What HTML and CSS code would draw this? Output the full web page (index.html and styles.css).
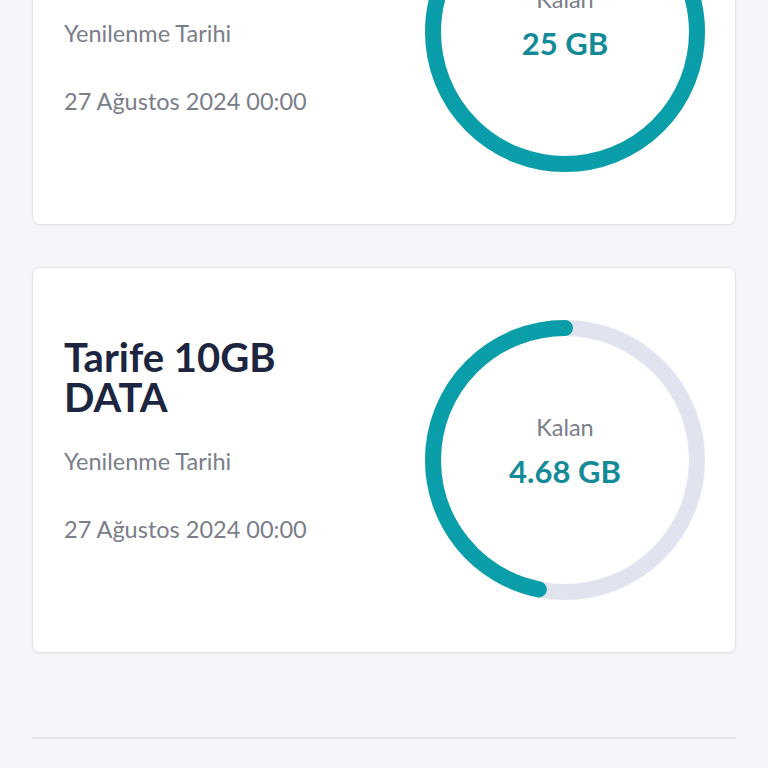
FILE: index.html
```html
<!DOCTYPE html>
<html lang="tr">
<head>
    <meta charset="UTF-8">
    <meta name="viewport" content="width=device-width, initial-scale=1.0">
    <title>Paketlerim</title>
    <link rel="stylesheet" href="styles.css">
</head>
<body>
    <div class="package-list">
        <div class="package-card">
            <div class="package-info">
                <h2 class="package-title">Tarife 25GB DATA</h2>
                <div class="package-label">Yenilenme Tarihi</div>
                <div class="package-date">27 Ağustos 2024 00:00</div>
            </div>
            <div class="usage">
                <svg class="usage-ring" width="280" height="280" viewBox="0 0 280 280">
                    <circle class="ring-track" cx="140" cy="140" r="132"></circle>
                    <circle class="ring-fill" cx="140" cy="140" r="132" stroke-dasharray="829.4 829.4"></circle>
                </svg>
                <div class="usage-text">
                    <div class="usage-label">Kalan</div>
                    <div class="usage-value">25 GB</div>
                </div>
            </div>
        </div>

        <div class="package-card">
            <div class="package-info">
                <h2 class="package-title">Tarife 10GB DATA</h2>
                <div class="package-label">Yenilenme Tarihi</div>
                <div class="package-date">27 Ağustos 2024 00:00</div>
            </div>
            <div class="usage">
                <svg class="usage-ring" width="280" height="280" viewBox="0 0 280 280">
                    <circle class="ring-track" cx="140" cy="140" r="132"></circle>
                    <circle class="ring-fill" cx="140" cy="140" r="132" stroke-dasharray="388.2 829.4"></circle>
                </svg>
                <div class="usage-text">
                    <div class="usage-label">Kalan</div>
                    <div class="usage-value">4.68 GB</div>
                </div>
            </div>
        </div>

        <hr class="divider">
    </div>
</body>
</html>
```

FILE: styles.css
```css
body {
    margin: 0;
    background: #f5f6f9;
    font-family: Lato, 'Noto Sans', sans-serif;
    overflow: hidden;
}

.package-list {
    margin-top: -161px;
    padding: 0 32px;
    display: flex;
    flex-direction: column;
    gap: 42px;
}

.package-card {
    background: #fff;
    border: 1px solid #e2e4ea;
    border-radius: 8px;
    box-shadow: 0 1px 2px rgba(0, 0, 0, 0.04);
    height: 384px;
    padding: 0 30px 0 31px;
    display: flex;
    justify-content: space-between;
    align-items: center;
}

.package-info {
    align-self: flex-start;
    padding-top: 69px;
    width: 270px;
}

.package-title {
    margin: 0 0 30px;
    font-size: 40px;
    line-height: 40px;
    font-weight: 700;
    color: #1d2540;
}

.package-label,
.package-date {
    font-size: 23.5px;
    line-height: 28px;
    color: #7a7e89;
}

.package-label {
    margin-bottom: 40px;
}

.usage {
    display: grid;
    place-items: center;
}

.usage-ring,
.usage-text {
    grid-area: 1 / 1;
}

.usage-ring {
    transform: scaleX(-1) rotate(-90deg);
}

.ring-track,
.ring-fill {
    fill: none;
    stroke-width: 16;
}

.ring-track {
    stroke: #e1e4ee;
}

.ring-fill {
    stroke: #0a9eaa;
    stroke-linecap: round;
}

.usage-text {
    text-align: center;
    margin-top: -19px;
}

.usage-label {
    font-size: 23.5px;
    line-height: 28px;
    color: #7a7e89;
    margin-bottom: 12px;
}

.usage-value {
    font-size: 31px;
    line-height: 36px;
    font-weight: 700;
    color: #138b96;
}

.divider {
    margin: 42px 0 0;
    border: none;
    border-top: 2px solid #e3e5ee;
}
```
